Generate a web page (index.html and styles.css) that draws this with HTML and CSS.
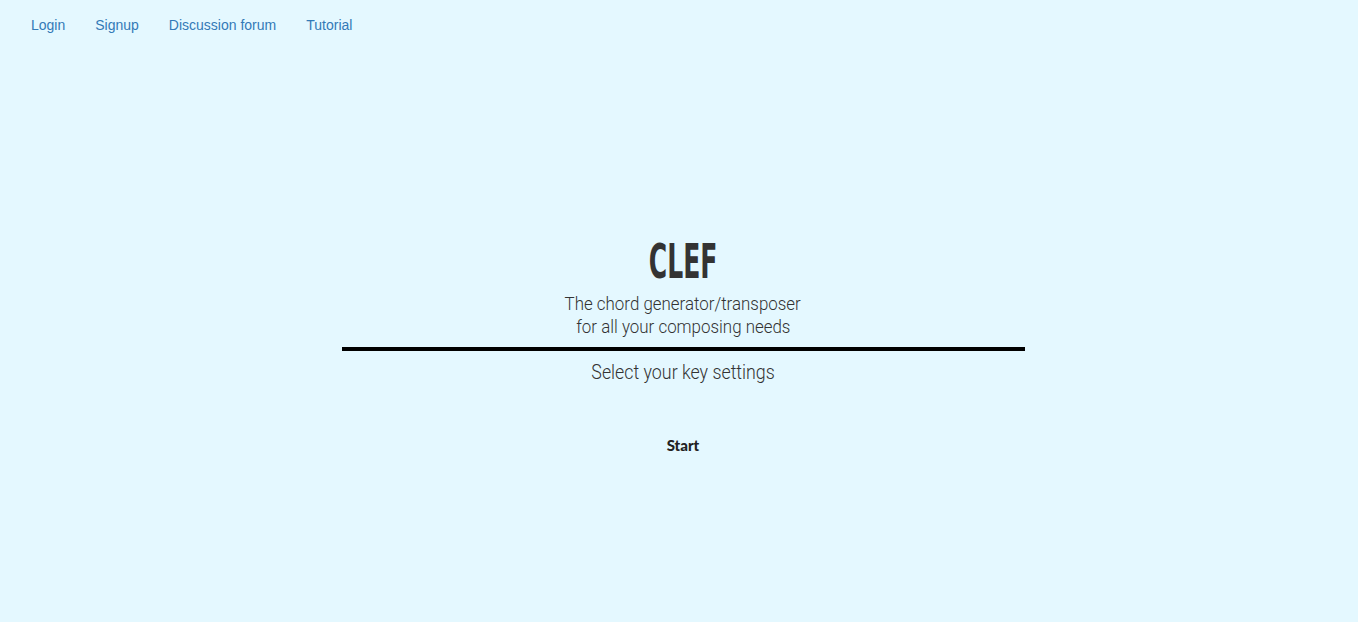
FILE: index.html
```html
<!DOCTYPE html>
<html lang="en">
<head>
<meta charset="utf-8">
<title>Clef</title>
<link rel="stylesheet" href="styles.css">
</head>
<body>
<nav class="topnav">
  <a class="nav-link" href="#">Login</a>
  <a class="nav-link" href="#">Signup</a>
  <a class="nav-link" href="#">Discussion forum</a>
  <a class="nav-link" href="#">Tutorial</a>
</nav>
<main class="hero">
  <h1 class="title"><span class="title-text">CLEF</span></h1>
  <p class="subtitle"><span class="narrow">The chord generator/transposer</span><br><span class="narrow">for all your composing needs</span></p>
  <hr class="divider">
  <p class="prompt"><span class="narrow">Select your key settings</span></p>
  <button class="start" type="button">Start</button>
</main>
</body>
</html>
```
FILE: styles.css
```css
html, body {
  margin: 0;
  padding: 0;
  background: #e4f8ff;
  height: 100%;
}
body {
  font-family: "Liberation Sans", Arial, sans-serif;
  color: #333;
}
.topnav {
  display: flex;
  padding: 0 16px;
  height: 50px;
  align-items: center;
}
.nav-link {
  font-size: 14px;
  color: #337ab7;
  text-decoration: none;
  padding: 0 15px;
  line-height: 20px;
}
.hero {
  display: flex;
  flex-direction: column;
  align-items: center;
  padding-left: 8px;
  padding-top: 182px;
}
.title {
  margin: 0;
  height: 58px;
  line-height: 58px;
}
.title-text {
  display: inline-block;
  font-family: "DejaVu Sans Condensed", "DejaVu Sans", sans-serif;
  font-weight: bold;
  font-size: 48px;
  color: #333;
  transform: scaleX(0.58);
}
.narrow {
  display: inline-block;
  transform: scaleX(0.89);
}
.subtitle {
  margin: 2px 0 0;
  font-family: Roboto, sans-serif;
  font-weight: 300;
  font-size: 19px;
  line-height: 23px;
  text-align: center;
  color: #333;
}
.divider {
  width: 683px;
  height: 4px;
  background: #000;
  border: 0;
  margin: 9px 0 9px;
}
.prompt {
  margin: 0;
  font-family: Roboto, sans-serif;
  font-weight: 300;
  font-size: 20px;
  line-height: 24px;
  color: #333;
}
.start {
  margin-top: 52px;
  background: none;
  border: 0;
  font-family: Lato, sans-serif;
  font-weight: 900;
  font-size: 15px;
  color: #222;
  padding: 0;
}
```
